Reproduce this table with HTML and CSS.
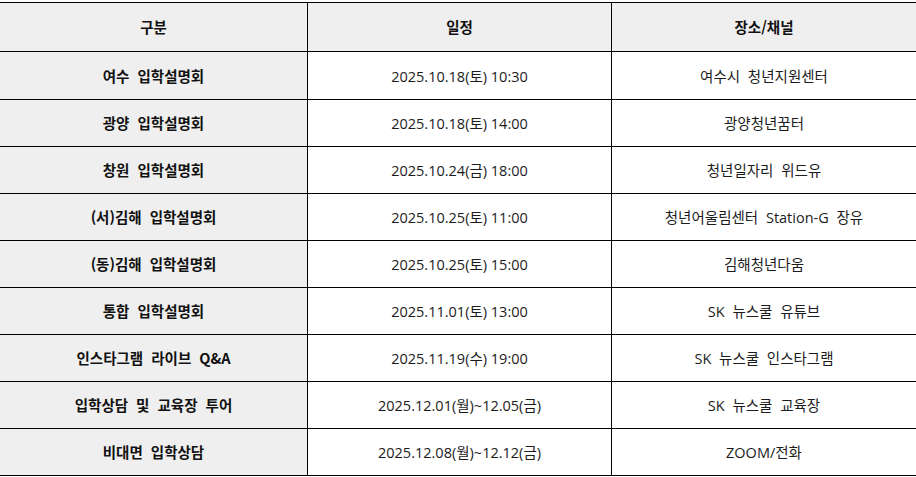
FILE: index.html
```html
<!DOCTYPE html>
<html lang="ko">
<head>
<meta charset="utf-8">
<title>입학설명회 일정</title>
<link rel="stylesheet" href="styles.css">
</head>
<body>
<div class="schedule">
  <div class="cell head label">구분</div>
  <div class="cell head date">일정</div>
  <div class="cell head last">장소/채널</div>

  <div class="cell label">여수 입학설명회</div>
  <div class="cell date">2025.10.18(토) 10:30</div>
  <div class="cell last">여수시 청년지원센터</div>

  <div class="cell label">광양 입학설명회</div>
  <div class="cell date">2025.10.18(토) 14:00</div>
  <div class="cell last">광양청년꿈터</div>

  <div class="cell label">창원 입학설명회</div>
  <div class="cell date">2025.10.24(금) 18:00</div>
  <div class="cell last">청년일자리 위드유</div>

  <div class="cell label">(서)김해 입학설명회</div>
  <div class="cell date">2025.10.25(토) 11:00</div>
  <div class="cell last">청년어울림센터 Station-G 장유</div>

  <div class="cell label">(동)김해 입학설명회</div>
  <div class="cell date">2025.10.25(토) 15:00</div>
  <div class="cell last">김해청년다움</div>

  <div class="cell label">통합 입학설명회</div>
  <div class="cell date">2025.11.01(토) 13:00</div>
  <div class="cell last">SK 뉴스쿨 유튜브</div>

  <div class="cell label">인스타그램 라이브 Q&amp;A</div>
  <div class="cell date">2025.11.19(수) 19:00</div>
  <div class="cell last">SK 뉴스쿨 인스타그램</div>

  <div class="cell label">입학상담 및 교육장 투어</div>
  <div class="cell date">2025.12.01(월)~12.05(금)</div>
  <div class="cell last">SK 뉴스쿨 교육장</div>

  <div class="cell label">비대면 입학상담</div>
  <div class="cell date">2025.12.08(월)~12.12(금)</div>
  <div class="cell last">ZOOM/전화</div>
</div>
</body>
</html>
```

FILE: styles.css
```css
html, body {
  margin: 0;
  padding: 0;
  background: #ffffff;
}

body {
  padding-top: 2px;
  font-family: "Open Sans", "Noto Sans CJK KR", sans-serif;
  font-size: 14.5px;
  color: #1c1c1c;
}

.schedule {
  display: grid;
  grid-template-columns: 308px 304px 304px;
  grid-template-rows: 49px 48px;
  grid-auto-rows: 47px;
  border-top: 1px solid #000;
  width: 916px;
}

.cell {
  box-sizing: border-box;
  display: flex;
  align-items: center;
  justify-content: center;
  border-bottom: 1px solid #000;
  border-right: 1px solid #000;
  white-space: nowrap;
  padding-bottom: 1px;
  word-spacing: 4px;
}

.cell.date {
  word-spacing: 0;
}

.cell.last {
  border-right: none;
}

.head,
.label {
  background: #efefef;
  font-family: "Noto Sans CJK KR", sans-serif;
  font-size: 14.5px;
  font-weight: 700;
  color: #111;
}
```
